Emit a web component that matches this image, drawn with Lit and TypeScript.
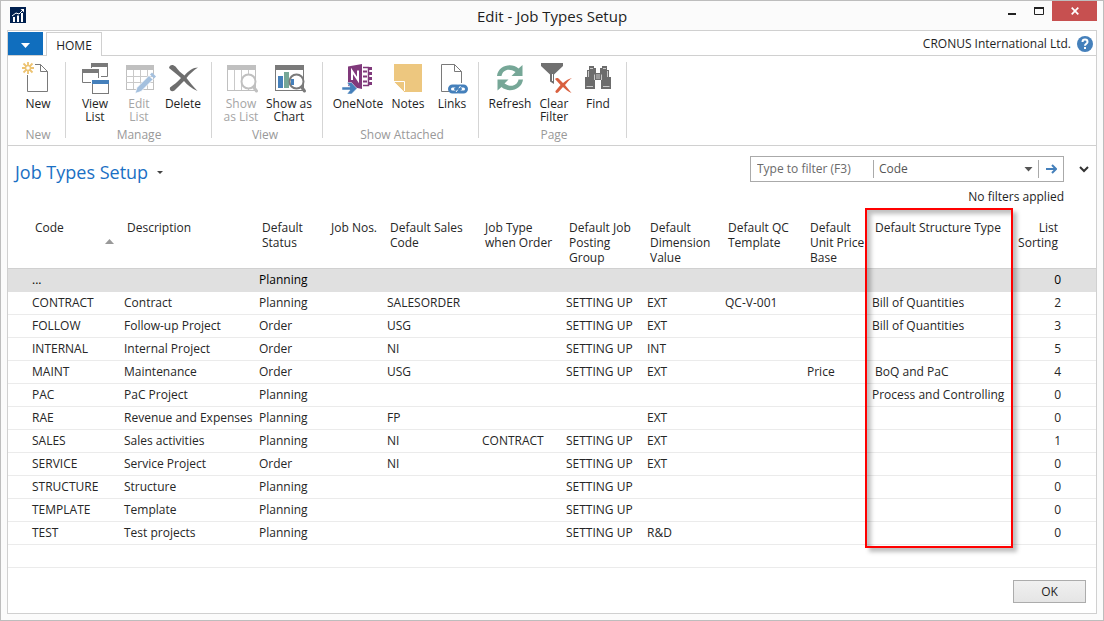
import { LitElement, html, svg, css, nothing } from "lit";
import { customElement, property } from "lit/decorators.js";
import { classMap } from "lit/directives/class-map.js";

const page = svg`
  <path d="M13 2.5H18.500L25.500 9.500V29.500H5.500V13" fill="#fff" stroke="#7a7a7a" />
  <path d="M18.500 2.500V9.500H25.500" fill="none" stroke="#7a7a7a" />`;

const linkedPage = svg`
  <path d="M13 29.500H5.500V2.500H18.500L25.500 9.500V21" fill="#fff" stroke="#7a7a7a" />
  <path d="M18.500 2.500V9.500H25.500" fill="none" stroke="#7a7a7a" />`;

const magnifier = (x: number, color: string) => svg`
  <circle cx=${x} cy="19.500" r="7" fill="#fff" stroke=${color} stroke-width="2" />
  <path d="M${x + 5} 25L${x + 8} 29" stroke=${color} stroke-width="3" fill="none" stroke-linecap="round" />`;

const icons: Record<string, unknown> = {
  new: svg`${page}
    <circle cx="6" cy="6" r="2.500" fill="#fff" stroke="#edc372" stroke-width="1.500" />
    <path d="M6 0V3M6 9V12M0 6H3M9 6H12M1.500 1.500L4 4M8 8L10.500 10.500M10.500 1.500L8 4M4 8L1.500 10.500" stroke="#edc372" stroke-width="1.800" />`,
  view: svg`
    <path d="M12.500 1.500H28.500V14.500H22M12.500 1.500V6" fill="none" stroke="#7a7a7a" />
    <rect x="12" y="1" width="17" height="4" fill="#7a7a7a" />
    <rect x="3.500" y="7.500" width="16" height="13" fill="#fff" /><path d="M12 20.500H3.500V7.500H19.500V16" fill="none" stroke="#7a7a7a" />
    <rect x="3" y="7" width="17" height="4" fill="#7a7a7a" />
    <rect x="13.500" y="18.500" width="16" height="13" fill="#fff" stroke="#7a7a7a" />
    <rect x="13" y="18" width="17" height="4" fill="#4580bb" />`,
  edit: svg`
    <rect x="3.500" y="3.500" width="27" height="24" fill="#fff" stroke="#c0c0c0" />
    <rect x="3" y="3" width="28" height="5" fill="#c0c0c0" />
    <path d="M10.500 8V27M17.500 8V27M24.500 8V27M3 14.500H30M3 20.500H30" stroke="#c9c9c9" />
    <path d="M12 31.500L14 25.500L26 13.500L30 17.500L18 29.500Z" fill="#a4c0de" stroke="#fff" stroke-width="0.800" />
    <path d="M27 12.500L29 10.500L33 14.500L31 16.500Z" fill="#a4c0de" />`,
  delete: svg`
    <path d="M2 6C2.500 2.500 6 2 8.500 4.500C11 8 14 11 17.500 13.500C21.500 9 26 5.500 31 5.500C26.500 8.500 22.500 12 19.500 16C22.500 20 26 24 30.500 29C24.500 26.500 20.500 23 17 19C13.500 22.500 10.500 25.500 7.500 28.500C5 30.500 2 28.500 3 25.500C7 22.500 10.500 20 14 16C10.500 12.500 6 9.500 2 6Z" fill="#6e6e6e" />`,
  list: svg`
    <rect x="2.500" y="3.500" width="28" height="25" fill="#fff" stroke="#c0c0c0" />
    <rect x="2" y="3" width="29" height="5" fill="#c0c0c0" />
    <path d="M9.500 8V28M16.500 8V28M23.500 8V28" stroke="#c9c9c9" />
    ${magnifier(23.5, "#c0c0c0")}`,
  chart: svg`
    <rect x="2.500" y="3.500" width="28" height="25" fill="#fff" stroke="#7a7a7a" />
    <rect x="2" y="3" width="29" height="5" fill="#7a7a7a" />
    <rect x="5" y="14" width="5" height="12" fill="#4580bb" />
    <rect x="11" y="10" width="5" height="16" fill="#76a797" />
    ${magnifier(23.5, "#7a7a7a")}
    <rect x="18" y="17" width="3" height="6" fill="#4580bb" />`,
  onenote: svg`
    <path d="M21 5.500H26.500V23.500H21" fill="#fff" stroke="#80397b" stroke-width="1.500" />
    <path d="M21 9.500H25M21 14.500H25M21 19.500H25" stroke="#80397b" stroke-width="2" />
    <path d="M28 5V8M28 10V13M28 15V18M28 20V23" stroke="#80397b" stroke-width="4" />
    <path d="M6 4.500L20 2V27L6 24Z" fill="#80397b" />
    <path d="M10 18V9L16 18V8.500" fill="none" stroke="#fff" stroke-width="2" />
    <path d="M0 25H8L5 20.500H9.500L15 26.500L9.500 32H5L8 28H0Z" fill="#4580bb" stroke="#fff" stroke-width="0.500" />`,
  notes: svg`
    <path d="M2 2H30V30H13L2 19Z" fill="#edc77f" />
    <path d="M2 19.500H12.500V30" fill="#edc77f" stroke="#fff" />
    <path d="M3 20L13 30" stroke="#edc77f" />`,
  links: svg`${linkedPage}
    <g fill="none" stroke="#4580bb" stroke-width="3"><rect x="13.500" y="24" width="10" height="6" rx="3" /><rect x="20.500" y="24" width="10" height="6" rx="3" /></g>
    <path d="M20 30L24.500 24" stroke="#fff" />
    <path d="M18 27H26" stroke="#4580bb" stroke-width="1.500" />`,
  refresh: svg`
    <path d="M3 14C4 4 17 0 24.500 6.500L28.500 3V14H17.500L21.500 10C15 5.500 8.500 8 7.500 14Z" fill="#76a797" />
    <path d="M29 17.500C28 27.500 15 31.500 7.500 25L3.500 28.500V17.500H14.500L10.500 21.500C17 26 23.500 23.500 24.500 17.500Z" fill="#76a797" />`,
  clear: svg`
    <path d="M3 1H25V4L16 12.500V22L12 19.500V12.500L3 4Z" fill="#707070" />
    <path d="M14.500 12V19" stroke="#fff" />
    <path d="M17 17C18.500 15.500 20.500 16 21.500 17.500L25 21C28 18.500 31 16.500 34 16C31 18 29 20.500 27 23L33.500 31C30 29.500 27 27 25 25L20 30.500C18.500 31.500 17 30.500 17.500 29L22.500 23Z" fill="#d9603f" />`,
  find: svg`
    <path d="M7 4H12V6H14V11H18V6H20V4H25V8H27V15H29V27H19V18H13V27H3V15H5V8H7Z" fill="#6c6c6c" />
    <path d="M8 6.500H11M21 6.500H24M6.500 9V15M25.500 9V15M12.500 12.500V18M19.500 12.500V18M4.500 24.500H11M21 24.500H27.500M15 12V17M17 12V17" stroke="#fff" stroke-width="0.800" opacity="0.800" />`,
};

type Action = { icon: string; label: string; width?: "wide" | "wider"; disabled?: boolean };
type Group = { caption: string; key: string; actions: Action[] };

const groups: Group[] = [
  { caption: "New", key: "new", actions: [{ icon: "new", label: "New" }] },
  {
    caption: "Manage", key: "manage", actions: [
      { icon: "view", label: "View\nList" },
      { icon: "edit", label: "Edit\nList", disabled: true },
      { icon: "delete", label: "Delete" },
    ],
  },
  {
    caption: "View", key: "view", actions: [
      { icon: "list", label: "Show\nas List", width: "wide", disabled: true },
      { icon: "chart", label: "Show as\nChart", width: "wide" },
    ],
  },
  {
    caption: "Show Attached", key: "attached", actions: [
      { icon: "onenote", label: "OneNote", width: "wider" },
      { icon: "notes", label: "Notes" },
      { icon: "links", label: "Links" },
    ],
  },
  {
    caption: "Page", key: "page", actions: [
      { icon: "refresh", label: "Refresh" },
      { icon: "clear", label: "Clear\nFilter" },
      { icon: "find", label: "Find" },
    ],
  },
];

const columns: { key: string; title: string }[] = [
  { key: "code", title: "Code" },
  { key: "description", title: "Description" },
  { key: "status", title: "Default\nStatus" },
  { key: "nos", title: "Job Nos." },
  { key: "sales", title: "Default Sales\nCode" },
  { key: "order", title: "Job Type\nwhen Order" },
  { key: "posting", title: "Default Job\nPosting\nGroup" },
  { key: "dimension", title: "Default\nDimension\nValue" },
  { key: "qc", title: "Default QC\nTemplate" },
  { key: "price", title: "Default\nUnit Price\nBase" },
  { key: "structure", title: "Default Structure Type" },
  { key: "sorting", title: "List\nSorting" },
];

const rows: string[][] = [
  ["...", "", "Planning", "", "", "", "", "", "", "", "", "0"],
  ["CONTRACT", "Contract", "Planning", "", "SALESORDER", "", "SETTING UP", "EXT", "QC-V-001", "", "Bill of Quantities", "2"],
  ["FOLLOW", "Follow-up Project", "Order", "", "USG", "", "SETTING UP", "EXT", "", "", "Bill of Quantities", "3"],
  ["INTERNAL", "Internal Project", "Order", "", "NI", "", "SETTING UP", "INT", "", "", "", "5"],
  ["MAINT", "Maintenance", "Order", "", "USG", "", "SETTING UP", "EXT", "", "Price", "\u00a0BoQ and PaC", "4"],
  ["PAC", "PaC Project", "Planning", "", "", "", "", "", "", "", "Process and Controlling", "0"],
  ["RAE", "Revenue and Expenses", "Planning", "", "FP", "", "", "EXT", "", "", "", "0"],
  ["SALES", "Sales activities", "Planning", "", "NI", "CONTRACT", "SETTING UP", "EXT", "", "", "", "1"],
  ["SERVICE", "Service Project", "Order", "", "NI", "", "SETTING UP", "EXT", "", "", "", "0"],
  ["STRUCTURE", "Structure", "Planning", "", "", "", "SETTING UP", "", "", "", "", "0"],
  ["TEMPLATE", "Template", "Planning", "", "", "", "SETTING UP", "", "", "", "", "0"],
  ["TEST", "Test projects", "Planning", "", "", "", "SETTING UP", "R&D", "", "", "", "0"],
  ["", "", "", "", "", "", "", "", "", "", "", ""],
];

@customElement("ribbon-bar")
class RibbonBar extends LitElement {
  static styles = css`
    :host { display: flex; padding: 6px 0 7px; border-bottom: 1px solid #d0d0d0; }
    .group { border-right: 1px solid #d5d5d5; height: 76px; }
    .actions { display: flex; height: 65px; }
    .new { padding: 0 5px 0 8px; }
    .manage { padding: 0 6px 0 7px; }
    .view { padding: 0 9px 0 5px; }
    .attached { padding: 0 4px 0 7px; }
    .page { padding: 0 6px 0 9px; }
    .action { display: flex; flex-direction: column; align-items: center; gap: 3px; width: 44px; padding: 0; border: 0; background: none; font: inherit; line-height: 13px; color: #1e1e1e; white-space: pre; }
    .wide { width: 48px; }
    .wider { width: 56px; }
    .action:disabled { color: #a5a5a5; }
    .icon { display: block; width: 32px; height: 32px; overflow: visible; flex: none; }
    .caption { text-align: center; line-height: 16px; color: #999; }
  `;
  render() {
    return groups.map((g) => html`
      <div class="group ${g.key}" role="group" aria-label=${g.caption}>
        <div class="actions">
          ${g.actions.map((a) => html`
            <button class=${classMap({ action: true, wide: a.width === "wide", wider: a.width === "wider" })} ?disabled=${a.disabled}>
              <svg class="icon" viewBox="0 0 32 32" aria-hidden="true">${icons[a.icon]}</svg>
              <span>${a.label}</span>
            </button>`)}
        </div>
        <div class="caption">${g.caption}</div>
      </div>`);
  }
}

@customElement("job-table")
class JobTable extends LitElement {
  @property({ type: Number }) selected = 0;
  static styles = css`
    :host { display: block; position: relative; }
    .grid { width: 100%; border-collapse: separate; border-spacing: 0; table-layout: fixed; color: #262626; }
    .head { height: 52px; padding: 3px 0 0 7px; box-sizing: border-box; vertical-align: top; text-align: left; font-weight: 400; line-height: 15px; white-space: pre; border-bottom: 1px solid #d0d0d0; }
    .cell { height: 23px; padding: 0 0 0 4px; box-sizing: border-box; line-height: 22px; white-space: nowrap; border-bottom: 1px solid #ebebeb; }
    .selected .cell { background: #e0e0e0; border-bottom-color: #e0e0e0; color: #000; }
    .code { width: 112px; }
    .head.code { padding-left: 27px; }
    .cell.code { padding-left: 24px; }
    .description { width: 135px; }
    .status { width: 69px; }
    .nos { width: 59px; }
    .sales { width: 95px; }
    .order { width: 84px; }
    .posting { width: 81px; }
    .dimension { width: 78px; }
    .qc { width: 82px; }
    .price { width: 65px; }
    .sorting { width: 80px; text-align: right; }
    .head.sorting { padding-right: 38px; padding-left: 0; }
    .cell.sorting { padding-right: 35px; }
    .sort { display: block; width: 9px; height: 5px; margin: 4px 6px 0 auto; fill: #999; }
    .highlight { position: absolute; left: 857px; right: 83px; top: -9px; bottom: 20px; border: 2px solid #f00; box-shadow: 4px 4px 4px rgba(0, 0, 0, 0.25), inset 4px 4px 4px rgba(0, 0, 0, 0.25); pointer-events: none; }
  `;
  render() {
    return html`
      <table class="grid">
        <thead>
          <tr>${columns.map((c) => html`<th class="head ${c.key}" scope="col">${c.title}${c.key === "code"
            ? html`<svg class="sort" viewBox="0 0 9 5" role="img" aria-label="Ascending"><path d="M0 5L4.500 0L9 5Z" /></svg>` : nothing}</th>`)}</tr>
        </thead>
        <tbody>
          ${rows.map((r, i) => html`<tr class=${classMap({ selected: i === this.selected })}>
            ${r.map((v, j) => html`<td class="cell ${columns[j].key}">${v}</td>`)}
          </tr>`)}
        </tbody>
      </table>
      <div class="highlight"></div>`;
  }
}

@customElement("app-root")
class AppRoot extends LitElement {
  static styles = css`
    :host { display: flex; flex-direction: column; box-sizing: border-box; min-height: 100vh; border: 1px solid #bdbdbd; padding: 0 6px 6px 6px; background: #fbfbfb; font: 12px/16px "Open Sans", "Noto Sans", sans-serif; color: #1e1e1e; }
    button, input, select { font: inherit; color: inherit; }
    .titlebar { display: grid; grid-template-columns: 1fr auto 1fr; align-items: start; height: 29px; }
    .logo { width: 16px; height: 16px; margin: 6px 0 0 3px; }
    .title { margin: 0; padding-top: 5px; font-size: 15px; line-height: 20px; font-weight: 400; }
    .controls { display: flex; justify-content: flex-end; }
    .control { display: grid; place-items: center; width: 27px; height: 20px; padding: 0; border: 0; background: none; }
    .close { width: 45px; background: #c75050; }
    .client { flex: 1; display: flex; flex-direction: column; border: 1px solid #d0d0d0; background: #fff; }
    .tabs { display: flex; align-items: stretch; height: 24px; border-bottom: 1px solid #d0d0d0; }
    .menu { width: 35px; margin: 1px 3px 0 0; padding: 0; border: 0; background: #106ebe; }
    .tab { width: 56px; margin: 1px 0 -1px; padding: 2px 0 0; border: 1px solid #d0d0d0; border-bottom: 0; background: #fff; }
    .company { display: flex; align-items: center; gap: 6px; margin-left: auto; padding: 2px 3px 0 0; }
    .help { display: block; padding: 0; border: 0; background: none; }
    .glyph { display: block; }
    .heading { display: flex; justify-content: space-between; align-items: flex-start; padding: 10px 7px 0; }
    .pagename { display: flex; align-items: center; gap: 9px; margin: 0; padding: 4px 0 0; font-size: 18px; line-height: 24px; font-weight: 400; color: #1a70c4; }
    .filters { display: grid; grid-template-columns: 314px 11px; column-gap: 14px; row-gap: 7px; align-items: center; justify-items: end; }
    .box { display: flex; align-items: center; box-sizing: border-box; width: 100%; height: 26px; border: 1px solid #aaa; }
    .query { flex: none; box-sizing: border-box; width: 122px; height: 22px; padding: 0 0 2px 6px; border: 0; outline: 0; background: none; }
    .query::placeholder { color: #6a6a6a; opacity: 1; }
    .field { position: relative; flex: 1; display: flex; align-items: center; height: 18px; border-left: 1px solid #aaa; border-right: 1px solid #aaa; }
    .select { appearance: none; width: 100%; padding: 0 0 0 5px; border: 0; outline: 0; background: none; color: #555; }
    .caret { position: absolute; right: 5px; pointer-events: none; }
    .go, .expand { display: grid; place-items: center; padding: 0; border: 0; background: none; }
    .go { width: 24px; height: 22px; }
    .table { margin-top: 12px; }
    .footer { display: flex; justify-content: flex-end; margin-top: auto; padding: 12px 10px 10px; }
    .ok { width: 73px; height: 23px; padding: 0; border: 1px solid #acacac; background: linear-gradient(#f0f0f0, #e5e5e5); }
  `;
  render() {
    return html`
      <header class="titlebar">
        <svg class="logo" viewBox="0 0 16 16" aria-hidden="true">
          <rect width="16" height="16" fill="#00204f" />
          <path d="M3 10H5V15H3ZM7 8.500H9V15H7ZM11 6H13V15H11Z" fill="#fff" />
          <path d="M2 9L6 6L9 7L13 3" stroke="#fff" fill="none" />
          <path d="M10.500 2H14V5.500Z" fill="#fff" />
        </svg>
        <h1 class="title">Edit - Job Types Setup</h1>
        <div class="controls">
          <button class="control" aria-label="Minimize"><svg class="glyph" width="12" height="10" viewBox="0 0 12 10"><path d="M2 8H10" stroke="#222" stroke-width="2" /></svg></button>
          <button class="control" aria-label="Maximize"><svg class="glyph" width="12" height="10" viewBox="0 0 12 10"><path d="M1 2H11" stroke="#222" stroke-width="2" /><path d="M1.500 2V8.500H10.500V2" stroke="#222" fill="none" /></svg></button>
          <button class="control close" aria-label="Close"><svg class="glyph" width="8" height="8" viewBox="0 0 8 8"><path d="M0.700 0.700L7.300 7.300M7.300 0.700L0.700 7.300" stroke="#fff" stroke-width="1.700" /></svg></button>
        </div>
      </header>
      <main class="client">
        <nav class="tabs">
          <button class="menu" aria-label="Application menu"><svg width="9" height="5" viewBox="0 0 9 5"><path d="M0 0H9L4.500 5Z" fill="#fff" /></svg></button>
          <button class="tab">HOME</button>
          <div class="company">CRONUS International Ltd.
            <button class="help" aria-label="Help"><svg class="glyph" width="16" height="16" viewBox="0 0 16 16"><circle cx="8" cy="8" r="8" fill="#4580bb" /><path d="M5.500 6C5.500 2.800 10.500 2.800 10.500 6C10.500 7.800 8 7.800 8 9.800" stroke="#fff" stroke-width="2" fill="none" /><rect x="7" y="11" width="2" height="2" fill="#fff" /></svg></button>
          </div>
        </nav>
        <ribbon-bar></ribbon-bar>
        <section class="heading">
          <h2 class="pagename">Job Types Setup <svg width="6" height="3" viewBox="0 0 6 3" aria-hidden="true"><path d="M0 0H6L3 3Z" fill="#444" /></svg></h2>
          <div class="filters">
            <div class="box">
              <input class="query" type="text" aria-label="Filter text" placeholder="Type to filter (F3)" />
              <div class="field">
                <select class="select" aria-label="Filter field"><option>Code</option></select>
                <svg class="caret" width="9" height="5" viewBox="0 0 9 5" aria-hidden="true"><path d="M0.500 0H8.500L4.500 4.500Z" fill="#555" /></svg>
              </div>
              <button class="go" aria-label="Apply filter"><svg class="glyph" width="11" height="10" viewBox="0 0 11 10"><path d="M0 5H10M6 1L10 5L6 9" stroke="#4580bb" stroke-width="2" fill="none" /></svg></button>
            </div>
            <button class="expand" aria-label="Expand filters"><svg class="glyph" width="10" height="7" viewBox="0 0 10 7"><path d="M1 1L5 5L9 1" stroke="#333" stroke-width="2" fill="none" /></svg></button>
            <span>No filters applied</span>
          </div>
        </section>
        <job-table class="table"></job-table>
        <footer class="footer"><button class="ok">OK</button></footer>
      </main>`;
  }
}
